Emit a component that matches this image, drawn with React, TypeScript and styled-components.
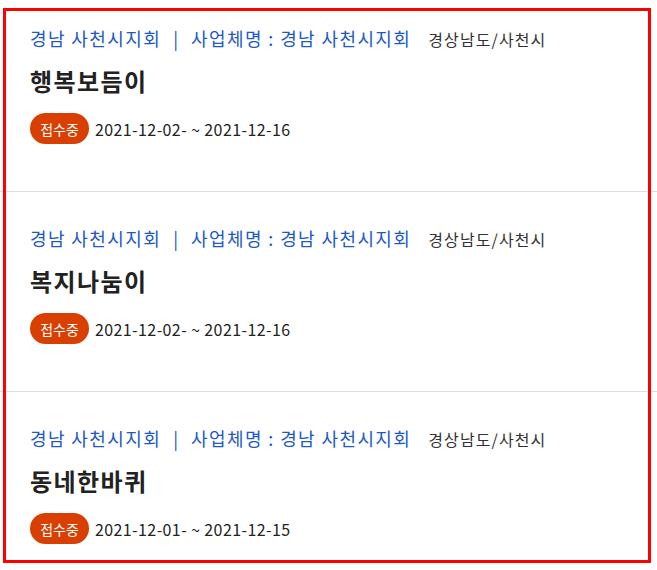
import React from "react";
import styled, { createGlobalStyle } from "styled-components";

const Global = createGlobalStyle`
  html, body { margin: 0; padding: 0; background: #fff; }
  body { font-family: "Noto Sans CJK KR", "Noto Sans", sans-serif; color: #222; overflow: hidden; }
`;

const Page = styled.div`
  position: relative;
  width: 657px;
  height: 570px;
  overflow: hidden;
`;

const List = styled.ul`
  list-style: none;
  margin: -8px 0 0;
  padding: 0;
`;

const Item = styled.li`
  box-sizing: border-box;
  height: 200px;
  padding: 34px 30px 0;
  border-bottom: 1px solid #dddddd;
  display: flex;
  flex-direction: column;
`;

const Meta = styled.div`
  display: flex;
  align-items: baseline;
  height: 24px;
  line-height: 24px;
  white-space: nowrap;
`;

const Org = styled.span`
  font-size: 18px;
  letter-spacing: 1.4px;
  color: #2159c4;
`;

const Sep = styled.span`
  font-size: 18px;
  color: #2159c4;
  margin: 0 13px 0 12px;
`;

const Region = styled.span`
  font-size: 16px;
  letter-spacing: 1.1px;
  color: #333;
  margin-left: 17px;
`;

const Title = styled.h3`
  margin: 15px 0 0;
  font-size: 24px;
  line-height: 32px;
  letter-spacing: 1.4px;
  font-weight: 700;
  color: #222;
`;

const Status = styled.div`
  display: flex;
  align-items: center;
  gap: 6px;
  margin-top: 16px;
`;

const Badge = styled.span`
  display: inline-flex;
  align-items: center;
  justify-content: center;
  width: 59px;
  height: 31px;
  border-radius: 16px;
  background: #d93f00;
  color: #fff;
  font-size: 14px;
`;

const Period = styled.span`
  font-size: 16px;
  letter-spacing: 0.4px;
  color: #222;
`;

const Frame = styled.div`
  position: absolute;
  left: 3px;
  top: 8px;
  width: 648px;
  height: 555px;
  box-sizing: border-box;
  border: 3px solid #ff0000;
  pointer-events: none;
`;

const items = [
  { title: "행복보듬이", period: "2021-12-02- ~ 2021-12-16" },
  { title: "복지나눔이", period: "2021-12-02- ~ 2021-12-16" },
  { title: "동네한바퀴", period: "2021-12-01- ~ 2021-12-15" },
];

export default function App() {
  return (
    <Page>
      <Global />
      <List>
        {items.map((it) => (
          <Item key={it.title}>
            <Meta>
              <Org>경남 사천시지회</Org>
              <Sep>|</Sep>
              <Org>사업체명 : 경남 사천시지회</Org>
              <Region>경상남도/사천시</Region>
            </Meta>
            <Title>{it.title}</Title>
            <Status>
              <Badge>접수중</Badge>
              <Period>{it.period}</Period>
            </Status>
          </Item>
        ))}
      </List>
      <Frame />
    </Page>
  );
}
